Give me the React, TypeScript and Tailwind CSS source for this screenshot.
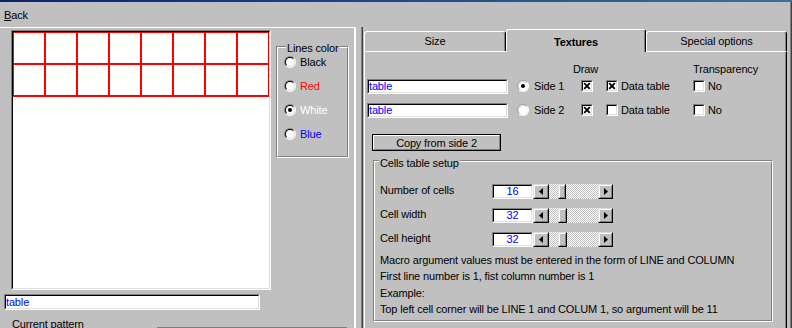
import React from "react";

const sunkenOuter = "border border-t-[#808080] border-l-[#808080] border-b-white border-r-white";
const sunkenInner = "border border-t-black border-l-black border-b-[#dfdfdf] border-r-[#dfdfdf]";
const raisedOuter = "border border-t-[#dfdfdf] border-l-[#dfdfdf] border-b-black border-r-black";
const raisedInner = "border border-t-white border-l-white border-b-[#808080] border-r-[#808080]";

function Edit({ value, className = "", center = false }: { value: string; className?: string; center?: boolean }) {
  return (
    <div className={`${sunkenOuter} ${className}`}>
      <div className={`${sunkenInner} h-full bg-white flex items-center leading-[12px] text-[#0000ff] ${center ? "justify-center" : ""}`}>
        {value}
      </div>
    </div>
  );
}

function Radio({ checked = false, light = false }: { checked?: boolean; light?: boolean }) {
  const outer = light
    ? "border border-t-[#a0a0a0] border-l-[#a0a0a0] border-b-white border-r-white"
    : "border border-t-[#808080] border-l-[#808080] border-b-white border-r-white";
  const inner = light
    ? "border border-t-[#dfdfdf] border-l-[#dfdfdf] border-b-white border-r-white"
    : "border border-t-black border-l-black border-b-[#dfdfdf] border-r-[#dfdfdf]";
  return (
    <div className={`w-[12px] h-[12px] rounded-full shrink-0 ${outer}`}>
      <div className={`w-full h-full rounded-full bg-white flex items-center justify-center ${inner}`}>
        {checked && <div className="w-[4px] h-[4px] rounded-full bg-black" />}
      </div>
    </div>
  );
}

function Check({ checked = false }: { checked?: boolean }) {
  return (
    <div className={`w-[12px] h-[12px] shrink-0 ${sunkenOuter}`}>
      <div className={`w-full h-full bg-white flex items-center justify-center ${sunkenInner}`}>
        {checked && (
          <svg width="8" height="8" viewBox="0 0 8 8">
            <path d="M1.2 1.2L6.8 6.8M6.8 1.2L1.2 6.8" stroke="#000" strokeWidth="1.9" />
          </svg>
        )}
      </div>
    </div>
  );
}

function Etched({ title, titleClass, className, children }: { title: string; titleClass: string; className: string; children?: React.ReactNode }) {
  return (
    <div className={`relative border border-t-[#808080] border-l-[#808080] border-b-white border-r-white ${className}`}>
      <div className="h-full border border-t-white border-l-white border-b-[#808080] border-r-[#808080]">{children}</div>
      <span className={`absolute bg-[#c0c0c0] px-[1px] leading-[12px] ${titleClass}`}>{title}</span>
    </div>
  );
}

function ArrowBtn({ dir, className }: { dir: "left" | "right"; className: string }) {
  return (
    <div className={`${raisedOuter} h-[15px] ${className}`}>
      <div className={`${raisedInner} h-full bg-[#c0c0c0] flex items-center justify-center`}>
        <svg width="4" height="7" viewBox="0 0 4 7">
          <path d={dir === "left" ? "M4 0L0 3.5L4 7Z" : "M0 0L4 3.5L0 7Z"} fill="#000" />
        </svg>
      </div>
    </div>
  );
}

function Spin({ label, value, thumbClass }: { label: string; value: string; thumbClass: string }) {
  return (
    <div className="flex items-center h-[24px]">
      <div className="w-[112px] pb-[2px] leading-[12px]">{label}</div>
      <Edit value={value} center className="w-[41px] h-[15px]" />
      <ArrowBtn dir="left" className="w-[16px]" />
      <div className="w-[49px] h-[15px] flex bg-[image:repeating-conic-gradient(#c0c0c0_0_25%,#ffffff_0_50%)] bg-[length:2px_2px]">
        <div className={`${raisedOuter} h-full ${thumbClass}`}>
          <div className={`${raisedInner} h-full bg-[#c0c0c0]`} />
        </div>
      </div>
      <ArrowBtn dir="right" className="w-[15px]" />
    </div>
  );
}

function LeftPanel() {
  const colors = [
    { name: "Black", cls: "text-black", on: false },
    { name: "Red", cls: "text-[#ff0000]", on: false },
    { name: "White", cls: "text-white", on: true },
    { name: "Blue", cls: "text-[#0000ff]", on: false },
  ];
  return (
    <div className="w-[356px] shrink-0 h-full border-t border-t-white border-r-2 border-r-white flex flex-col">
      <div className="flex pl-[11px] mt-[2px]">
        <div className={`w-[260px] h-[260px] ${sunkenOuter}`}>
          <div className={`h-full ${sunkenInner} bg-white`}>
            <svg width="256" height="256" viewBox="0 0 256 256" className="block">
              {[0, 1, 2].map((r) => (
                <rect key={"h" + r} x="0" y={r * 32 - 1} width="256" height="2" fill="#ff0000" />
              ))}
              {[0, 1, 2, 3, 4, 5, 6, 7, 8].map((c) => (
                <rect key={"v" + c} x={c * 32 - 1} y="0" width="2" height="65" fill="#ff0000" />
              ))}
            </svg>
          </div>
        </div>
        <Etched title="Lines color" titleClass="-top-[5px] left-[9px]" className="ml-[5px] mt-[16px] w-[73px] h-[112px]">
          <div className="pt-[2px] pl-[6px]">
            {colors.map((c) => (
              <div key={c.name} className="flex items-center h-[24px] gap-[4px]">
                <Radio checked={c.on} />
                <span className={`leading-[12px] ${c.cls}`}>{c.name}</span>
              </div>
            ))}
          </div>
        </Etched>
      </div>
      <Edit value="table" className="ml-[4px] mt-[4px] w-[256px] h-[16px]" />
      <div className="flex mt-[8px] pl-[12px]">
        <div className="w-[145px] leading-[12px]">Current pattern</div>
        <div className="mt-[9px] w-[190px] h-[20px] border-t border-l border-t-[#808080] border-l-[#808080]">
          <div className="h-full border-t border-l border-t-black border-l-black" />
        </div>
      </div>
    </div>
  );
}

function Tabs() {
  const tabBase = "rounded-t-[3px] border-t border-l border-r border-t-white border-l-white border-r-black shadow-[inset_-1px_0_#808080] flex justify-center";
  return (
    <div className="w-[423px] shrink-0 flex flex-col mt-[2px]">
      <div className="flex items-start h-[22px]">
        <div className={`${tabBase} w-[142px] h-[20px] mt-[2px] pt-[3px] leading-[12px]`}>Size</div>
        <div className={`${tabBase} w-[140px] h-[23px] relative z-10 bg-[#c0c0c0] pt-[6px] leading-[12px] font-bold`}>Textures</div>
        <div className={`${tabBase} w-[141px] h-[20px] mt-[2px] pt-[3px] leading-[12px]`}>Special options</div>
      </div>
      <div className="flex-1 border-t border-l border-r border-t-white border-l-white border-r-black shadow-[inset_-1px_0_#808080]">
        <div className="h-[22px] pt-[11px] pl-[208px] flex leading-[12px]">
          <span className="w-[120px]">Draw</span>
          <span>Transparency</span>
        </div>
        {[
          { side: "Side 1", on: true, data: true },
          { side: "Side 2", on: false, data: false },
        ].map((r) => (
          <div key={r.side} className="flex items-center h-[24px]">
            <Edit value="table" className="ml-[2px] w-[141px] h-[15px]" />
            <div className="ml-[9px] w-[64px] flex items-center gap-[5px]">
              <Radio checked={r.on} light />
              <span className="leading-[12px]">{r.side}</span>
            </div>
            <div className="w-[25px]">
              <Check checked />
            </div>
            <div className="w-[87px] flex items-center gap-[3px]">
              <Check checked={r.data} />
              <span className="leading-[12px]">Data table</span>
            </div>
            <div className="flex items-center gap-[3px]">
              <Check />
              <span className="leading-[12px]">No</span>
            </div>
          </div>
        ))}
        <div className="ml-[7px] mt-[12px] w-[129px] h-[17px] border border-black">
          <div className={`${raisedInner} h-full flex items-center justify-center leading-[12px]`}>Copy from side 2</div>
        </div>
        <Etched title="Cells table setup" titleClass="-top-[4px] left-[5px]" className="ml-[8px] mt-[9px] w-[400px] h-[162px]">
          <div className="pt-[17px] pl-[5px]">
            <Spin label="Number of cells" value="16" thumbClass="ml-[9px] w-[8px]" />
            <Spin label="Cell width" value="32" thumbClass="ml-[9px] w-[9px]" />
            <Spin label="Cell height" value="32" thumbClass="ml-[9px] w-[9px]" />
            <div className="mt-[1px] leading-[16.3px]">
              <div>Macro argument values must be entered in the form of LINE and COLUMN</div>
              <div>First line number is 1, fist column number is 1</div>
              <div>Example:</div>
              <div>Top left cell corner will be LINE 1 and COLUM 1, so argument will be 11</div>
            </div>
          </div>
        </Etched>
      </div>
    </div>
  );
}

export default function App() {
  return (
    <div className="w-[792px] h-[328px] overflow-hidden bg-[#c0c0c0] font-['Liberation_Sans',Arial,sans-serif] text-[11px] tracking-[-0.15px] text-black flex flex-col">
      <div className="h-[2px] shrink-0 bg-linear-to-r from-[#0a246a] to-[#3a6ea5]" />
      <div className="flex flex-1 min-h-0">
        <div className="w-[790px] flex flex-col">
          <div className="h-[25px] shrink-0 flex items-center pl-[4px] leading-[12px]">
            <span>
              <span className="underline underline-offset-[1px]">B</span>ack
            </span>
          </div>
          <div className="flex flex-1 min-h-0">
            <LeftPanel />
            <div className="w-[8px] shrink-0 flex">
              <div className="ml-[5px] w-[2px] border-l border-l-[#808080] border-r border-r-[#404040]" />
            </div>
            <Tabs />
          </div>
        </div>
        <div className="w-[2px] border-l border-l-[#808080] border-r border-r-[#404040]" />
      </div>
    </div>
  );
}
